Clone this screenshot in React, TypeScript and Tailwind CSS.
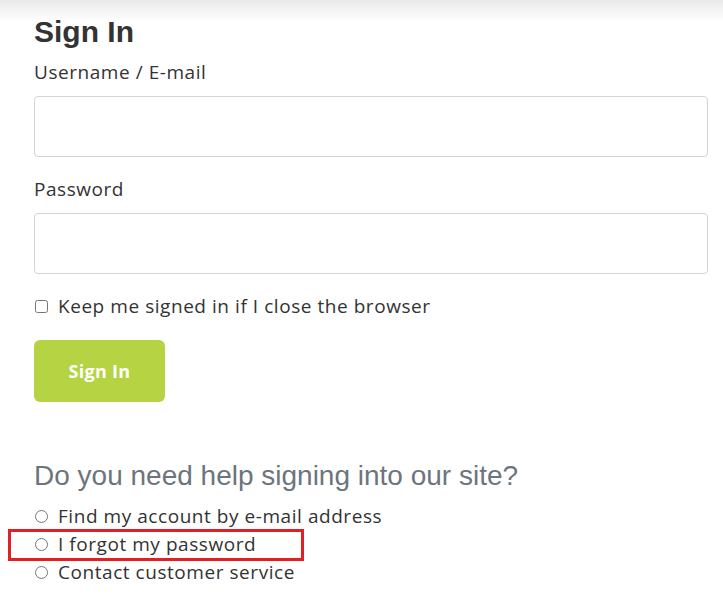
export default function App() {
  const body = { fontFamily: '"Open Sans", "Liberation Sans", sans-serif' };
  return (
    <div className="min-h-[605px] w-full bg-[linear-gradient(to_bottom,#e9e9e9,#ffffff_22px)]">
      <div className="pl-[34px] pr-[15px] pt-[15px]" style={body}>
        {/* Header */}
        <h1 className="font-['Liberation_Sans',Arial,sans-serif] text-[30px] font-bold leading-[34px] text-[#333333]">
          Sign In
        </h1>

        {/* Username */}
        <label className="mt-[11px] block text-[19px] leading-[24px] text-[#333333] tracking-[0.55px]">
          Username / E-mail
        </label>
        <input
          type="text"
          className="mt-[12px] block h-[61px] w-full rounded-[4px] border border-[#d4d4d4] bg-white px-3 outline-none"
        />

        {/* Password */}
        <label className="mt-[20px] block text-[19px] leading-[24px] text-[#333333] tracking-[0.55px]">
          Password
        </label>
        <input
          type="password"
          className="mt-[12px] block h-[61px] w-full rounded-[4px] border border-[#d4d4d4] bg-white px-3 outline-none"
        />

        {/* Remember me */}
        <label className="mt-[20px] flex items-center gap-[10px] text-[19px] leading-[24px] text-[#333333] tracking-[0.55px]">
          <input type="checkbox" className="ml-px h-[13px] w-[13px]" />
          Keep me signed in if I close the browser
        </label>

        <button className="mt-[22px] flex h-[62px] w-[131px] items-center justify-center rounded-[6px] bg-[#b5d342] text-[18px] font-bold tracking-[0.3px] text-white">
          Sign In
        </button>

        {/* Help */}
        <h2 className="mt-[58px] font-['Liberation_Sans',Arial,sans-serif] text-[28px] leading-[32px] text-[#6c757d]">
          Do you need help signing into our site?
        </h2>
        <ul className="mt-[10px]">
          {[
            "Find my account by e-mail address",
            "I forgot my password",
            "Contact customer service",
          ].map((item, i) => (
            <li key={i} className="relative">
              <label className="flex h-[28px] items-center gap-[10px] text-[19px] text-[#333333] tracking-[0.55px]">
                <input type="radio" name="help" className="ml-px h-[13px] w-[13px]" />
                {item}
              </label>
              {i === 1 && (
                <div className="pointer-events-none absolute left-[-26px] top-[-1px] h-[32px] w-[296px] border-[3px] border-[#e31e24]" />
              )}
            </li>
          ))}
        </ul>
      </div>
    </div>
  );
}
